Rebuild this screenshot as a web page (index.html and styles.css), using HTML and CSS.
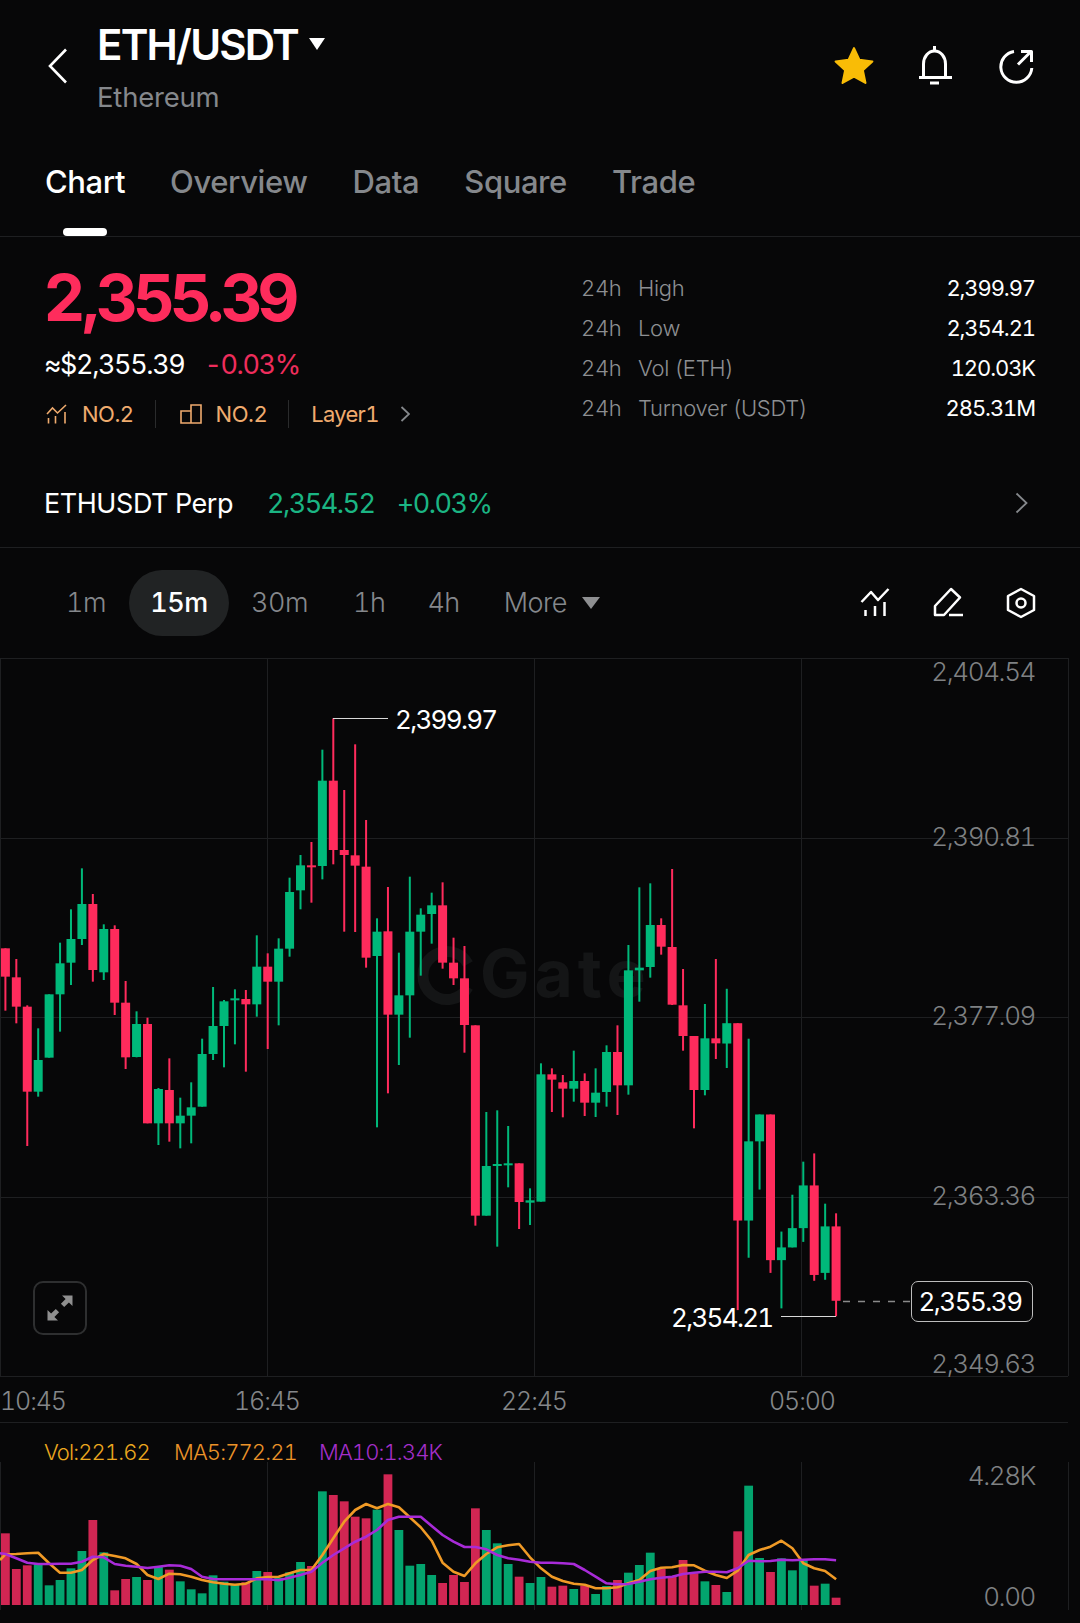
FILE: index.html
```html
<!DOCTYPE html>
<html lang="en">
<head>
<meta charset="utf-8">
<title>ETH/USDT Chart</title>
<link rel="stylesheet" href="styles.css">
</head>
<body>
<div class="page">
  <header class="header">
    <svg class="back" viewBox="0 0 20 36"><path d="M18 1.5 2 18l16 16.5"/></svg>
    <div class="pair">
      <div class="pair-title"><span>ETH/USDT</span><i class="tri tri-white"></i></div>
      <div class="pair-sub">Ethereum</div>
    </div>
    <div class="header-icons">
      <svg class="ico-star" viewBox="0 0 40 38"><path d="M20 2l5.200 11.200 12.300 1.500-9.100 8.300 2.500 12.100L20 29.100 9.100 35.100l2.500-12.100L2.500 14.700l12.300-1.500z"/></svg>
      <svg class="ico-line ico-bell" viewBox="140 25 36 40"><path d="M145.500 57V44a11 13 0 0 1 22 0V57"/><path d="M141 57.500h33"/><path d="M156.500 26v5"/><path d="M152 63h9"/></svg>
      <svg class="ico-line ico-share" viewBox="220 28 36 36"><path d="M236 31.500A15.500 15.500 0 1 0 253.800 48"/><path d="M240 44.500 252.500 32"/><path d="M243 31.500h10.500V42"/></svg>
    </div>
  </header>

  <nav class="tabs">
    <a class="tab tab-on">Chart</a>
    <a class="tab">Overview</a>
    <a class="tab">Data</a>
    <a class="tab">Square</a>
    <a class="tab">Trade</a>
  </nav>

  <section class="summary">
    <div class="quote">
      <div class="price">2,355.39</div>
      <div class="fiat"><span>≈$2,355.39</span><span class="down">-0.03%</span></div>
      <div class="ranks">
        <svg class="rank-ico" viewBox="0 0 22 20"><path d="M1 10 6.500 4l5 5L20 1"/><path d="M2.500 14v5.500M9.500 12v7.500M19 8v11.500"/></svg>
        <span class="rank-text">NO.2</span>
        <i class="rank-sep"></i>
        <svg class="rank-ico" viewBox="0 0 22 20"><path d="M1 7h10v12H1zM11 19V1h10v18z"/></svg>
        <span class="rank-text">NO.2</span>
        <i class="rank-sep"></i>
        <span class="rank-text rank-layer">Layer1</span>
        <svg class="chev chev-sm" viewBox="0 0 10 16"><path d="M1.500 1 9 8l-7.500 7"/></svg>
      </div>
    </div>
    <dl class="stats">
      <div class="stat"><dt><span class="h24">24h</span>High</dt><dd>2,399.97</dd></div>
      <div class="stat"><dt><span class="h24">24h</span>Low</dt><dd>2,354.21</dd></div>
      <div class="stat"><dt><span class="h24">24h</span>Vol (ETH)</dt><dd>120.03K</dd></div>
      <div class="stat"><dt><span class="h24">24h</span>Turnover (USDT)</dt><dd>285.31M</dd></div>
    </dl>
  </section>

  <section class="perp">
    <span class="perp-name">ETHUSDT Perp</span>
    <span class="perp-num">2,354.52</span>
    <span class="perp-num perp-pct">+0.03%</span>
    <svg class="chev chev-lg" viewBox="0 0 13 22"><path d="M1.500 1.500 11.500 11l-10 9.500"/></svg>
  </section>

  <section class="frames">
    <span class="fr fr-1m">1m</span>
    <span class="fr fr-on">15m</span>
    <span class="fr fr-30">30m</span>
    <span class="fr fr-1h">1h</span>
    <span class="fr fr-4h">4h</span>
    <span class="fr fr-more">More</span><i class="tri tri-gray"></i>
    <div class="frame-icons">
      <svg class="ico-line ico-tool" viewBox="860 586 32 32"><path d="M862.500 602 872 592l7 8 10.500-11"/><path d="M866.500 610v6M876 606v10M885.500 602v14"/></svg>
      <svg class="ico-line ico-tool" viewBox="934 586 32 32"><path d="M937 615v-9l16-17 9 8.500L946 615z"/><path d="M951 615h14"/></svg>
      <svg class="ico-line ico-tool" viewBox="1007 586 32 34"><path d="M1023 589l13 7v14l-13 7-13-7v-14z"/><circle cx="1023" cy="603" r="4.500"/></svg>
    </div>
  </section>

  <section class="chart">
    <svg class="plot" id="plot" viewBox="0 658 1080 764">
      <g class="grid">
        <path d="M0 658.500H1068M0 838.500H1068M0 1017.500H1068M0 1197.500H1068M0 1376.500H1068"/>
        <path d="M.5 658V1376M267.500 658V1376M534.500 658V1376M801.500 658V1376M1068.500 658V1376"/>
      </g>
      <text class="watermark" x="480" y="997">Gate</text>
      <path class="watermark-arc" d="M468 964a24 24 0 1 0 0 23"/>
      <g id="candles"></g>
      <path class="marker" d="M333 718.500H388M781 1316.500H836"/>
      <path class="dash" d="M843 1301.500H911"/>
      <text class="axis" x="1035" y="681">2,404.54</text>
      <text class="axis" x="1035" y="846">2,390.81</text>
      <text class="axis" x="1035" y="1025">2,377.09</text>
      <text class="axis" x="1035" y="1205">2,363.36</text>
      <text class="axis" x="1035" y="1373">2,349.63</text>
      <text class="mark-txt" x="395" y="729">2,399.97</text>
      <text class="mark-txt" x="671" y="1327">2,354.21</text>
      <text class="time" x="0" y="1410">10:45</text>
      <text class="time time-c" x="267" y="1410">16:45</text>
      <text class="time time-c" x="534" y="1410">22:45</text>
      <text class="time time-c" x="802" y="1410">05:00</text>
    </svg>
    <div class="tag">2,355.39</div>
    <div class="expand">
      <svg viewBox="0 0 28 28"><path d="M16 1.500h10.500V12l-3.600-3.600-4.700 4.700-3.300-3.300 4.700-4.700zM12 26.500H1.500V16l3.600 3.600 4.700-4.700 3.300 3.300-4.700 4.700z"/></svg>
    </div>
  </section>

  <section class="vol">
    <svg class="plot-vol" id="vol" viewBox="0 1422 1080 201">
      <g class="grid">
        <path d="M0 1422.500H1068"/>
        <path d="M.5 1462V1610M267.500 1462V1610M534.500 1462V1610M801.500 1462V1610M1068.500 1462V1610"/>
      </g>
      <g id="bars"></g>
      <path id="ma5" class="ma ma5"/>
      <path id="ma10" class="ma ma10"/>
      <text class="legend c-vol" x="44" y="1460">Vol:221.62</text>
      <text class="legend c-ma5" x="174" y="1460">MA5:772.21</text>
      <text class="legend c-ma10" x="319" y="1460">MA10:1.34K</text>
      <text class="axis" x="1035" y="1485">4.28K</text>
      <text class="axis" x="1035" y="1606">0.00</text>
    </svg>
  </section>
</div>
<script src="chart.js"></script>
</body>
</html>
```

FILE: styles.css
```css
* { box-sizing: border-box; margin: 0; padding: 0; }
html, body { background: #070708; }
body { font-family: Inter, "Noto Sans", "Liberation Sans", sans-serif; font-variant-numeric: tabular-nums; color: #fff; width: 1080px; height: 1623px; overflow: hidden; }
.page { width: 1080px; display: flex; flex-direction: column; }

.header { height: 137px; display: flex; align-items: flex-start; padding: 0 44px 0 48px; }
.back { width: 20px; height: 36px; margin-top: 48px; fill: none; stroke: #fff; stroke-width: 2.600; }
.pair { margin-left: 29px; margin-top: 20px; }
.pair-title { display: flex; align-items: center; font-size: 42px; line-height: 50px; font-weight: 600; letter-spacing: -1.800px; }
.pair-sub { margin-top: 11px; font-size: 27.500px; line-height: 32px; color: #85888c; letter-spacing: -.200px; }
.tri { display: block; width: 0; height: 0; border-style: solid; border-color: transparent; }
.tri-white { margin-left: 11px; margin-top: -2px; border-width: 12px 8px 0; border-top-color: #fff; }
.header-icons { margin-left: auto; display: flex; align-items: flex-start; padding-top: 45px; padding-right: 2px; }
.ico-star { width: 42px; height: 40px; margin-top: 1px; fill: #f9bc06; stroke: #f9bc06; stroke-width: 2; stroke-linejoin: round; }
.ico-line { fill: none; stroke: #fff; stroke-width: 3; stroke-linecap: butt; stroke-linejoin: round; }
.ico-bell { width: 36px; height: 40px; margin-left: 43px; }
.ico-share { width: 36px; height: 36px; margin-left: 44px; margin-top: 3px; }

.tabs { height: 100px; display: flex; padding-left: 45px; gap: 45px; border-bottom: 1px solid #1e1f21; }
.tab { position: relative; font-size: 31px; line-height: 40px; margin-top: 25px; color: #85888c; letter-spacing: -.400px; font-weight: 500; }
.tab-on { color: #fff; }
.tab-on::after { content: ""; position: absolute; left: 18px; width: 44px; top: 66px; height: 8px; border-radius: 4px; background: #fff; }

.summary { height: 209px; display: flex; justify-content: space-between; padding: 0 45px 0 45px; }
.quote { display: flex; flex-direction: column; margin-left: -1px; }
.price { margin-top: 21px; font-size: 65px; line-height: 80px; font-weight: 700; color: #fe2c5c; letter-spacing: -4.800px; font-variant-numeric: normal; }
.fiat { margin-top: 9px; display: flex; gap: 20px; font-size: 27px; line-height: 36px; letter-spacing: -1.400px; }
.down { color: #ee2d5c; }
.ranks { margin-top: 14px; display: flex; align-items: center; height: 34px; color: #efab6e; font-size: 22px; letter-spacing: -.500px; }
.rank-ico { width: 22px; height: 20px; fill: none; stroke: #efab6e; stroke-width: 1.600; margin: 0 14px 0 2px; }
.rank-sep { width: 1px; height: 28px; background: #2a2b2c; margin: 0 22px 0 21px; }
.rank-sep + .rank-ico { margin-left: 2px; }
.rank-layer { letter-spacing: -.700px; }
.chev { fill: none; stroke: #85888c; stroke-width: 1.800; }
.chev-sm { width: 10px; height: 16px; margin-left: 21px; }
.stats { margin-top: 31px; width: 454px; }
.stat { display: flex; justify-content: space-between; height: 40px; line-height: 40px; font-size: 22px; letter-spacing: -.300px; }
.stat dt { color: #8d8f92; font-weight: 300; }
.h24 { display: inline-block; width: 57px; }
.stat dd { font-weight: 400; letter-spacing: -1.100px; }

.perp { height: 102px; border-bottom: 1px solid #1e1f21; display: flex; align-items: center; padding: 13px 52px 0 44px; font-size: 27px; letter-spacing: -.450px; }
.perp-num { color: #1bb583; margin-left: 34px; font-size: 27px; letter-spacing: -1.500px; }
.perp-pct { margin-left: 22px; }
.chev-lg { width: 13px; height: 22px; margin-left: auto; }

.frames { position: relative; height: 110px; display: flex; align-items: center; padding-left: 66px; font-size: 27px; color: #85888c; letter-spacing: -.500px; font-weight: 300; }
.fr { line-height: 66px; }
.fr-on { width: 100px; height: 66px; margin-left: 23px; text-align: center; border-radius: 33px; background: #212324; color: #fff; font-weight: 500; }
.fr-30 { margin-left: 22px; }
.fr-1h { margin-left: 45px; }
.fr-4h { margin-left: 42px; }
.fr-more { margin-left: 44px; }
.tri-gray { margin-left: 15px; border-width: 12px 9px 0; border-top-color: #8e8f91; }
.frame-icons { margin-left: auto; display: flex; gap: 41px; padding-right: 43px; }
.ico-tool { width: 32px; height: 32px; stroke-width: 2.500; }
.frame-icons .ico-tool:last-child { width: 32px; height: 34px; }

.chart { position: relative; height: 764px; }
.plot { display: block; width: 1080px; height: 764px; overflow: visible; }
.vol { height: 201px; }
.plot-vol { display: block; width: 1080px; height: 201px; }
.grid path { fill: none; stroke: #1e1f21; stroke-width: 1; }
.watermark { font-size: 66px; font-weight: 700; fill: #141516; font-family: Inter, sans-serif; letter-spacing: 5px; }
.watermark-arc { fill: none; stroke: #141516; stroke-width: 11; }
.candle-up { fill: #00b97a; }
.candle-down { fill: #ff2b5c; }
.bar-up { fill: #03a46e; }
.bar-down { fill: #d12653; }
.marker { fill: none; stroke: #d8d8d8; stroke-width: 1; }
.dash { fill: none; stroke: #8a8a8a; stroke-width: 1.400; stroke-dasharray: 7 8; }
.axis { font-size: 26px; fill: #7f8183; text-anchor: end; letter-spacing: -1.400px; font-weight: 300; }
.mark-txt { font-size: 26px; fill: #fff; letter-spacing: -1.700px; font-weight: 400; }
.time { font-size: 25px; fill: #85878a; letter-spacing: -1.100px; font-weight: 300; }
.time-c { text-anchor: middle; }
.legend { font-size: 22px; letter-spacing: -.900px; font-weight: 300; }
.c-vol { fill: #eba81f; }
.c-ma5 { fill: #eb9329; }
.c-ma10 { fill: #a42fc9; }
.ma { fill: none; stroke-width: 2.600; stroke-linejoin: round; }
.ma5 { stroke: #f09a26; }
.ma10 { stroke: #a82bd8; }
.tag { position: absolute; left: 911px; top: 623px; width: 122px; height: 41px; padding-right: 4px; border: 1px solid #bdbdbd; border-radius: 7px; background: #070708; font-size: 26px; line-height: 40px; text-align: center; letter-spacing: -1.500px; }
.expand { position: absolute; left: 33px; top: 623px; width: 54px; height: 54px; border: 2px solid #2e2f30; border-radius: 10px; display: flex; align-items: center; justify-content: center; }
.expand svg { width: 28px; height: 28px; fill: #8f8f8f; }
```

FILE: chart.js
```js
// Candle data: [dir, wickTop, wickBottom, bodyTop, bodyBottom], in crop units of [origin, scale].
var SETS = [
  { y0: 660, s: 3, rows: [
    ['d',865,1052,865,950],['d',897,1090,952,1040],['d',1036,1458,1040,1295],['u',1105,1310,1200,1295],
    ['u',1003,1193,1003,1193],['u',848,1115,910,1003],['u',748,975,837,908],['u',625,855,732,837],
    ['d',702,965,732,930],['u',793,960,807,937],['d',796,1065,807,1028],['d',963,1227,1028,1192],
    ['u',1054,1192,1092,1191],['d',1073,1390,1092,1390],['u',1284,1455,1287,1390],['d',1195,1445,1290,1390],
    ['u',1313,1465,1367,1390],['u',1267,1450,1342,1367],['u',1136,1340,1182,1340],['u',981,1200,1098,1182],
    ['u',1020,1222,1024,1098],['u',988,1153,1015,1021],['d',990,1235,1017,1033],['u',826,1070,920,1033],
    ['d',880,1167,920,965],['u',835,1096,866,965],['u',653,890,696,866],['u',585,748,616,691],
    ['d',546,728,616,620],['u',269,658,362,618],['d',175,613,362,570],['d',390,815,570,585],
    ['d',253,816,586,617]
  ]},
  { y0: 780, s: 3, rows: [
    ['d',120,563,260,533],['u',415,1042,455,528],['d',321,940,454,704],['u',518,855,646,704],
    ['u',290,773,455,646],['u',385,587,404,455],['u',338,491,376,402],['d',307,566,376,548],
    ['d',473,615,548,595],['d',498,818,595,735],['d',736,1337,736,1307],['u',996,1307,1158,1307],
    ['u',991,1400,1152,1158],['u',1038,1222,1150,1155],['d',1150,1347,1150,1266],['u',1225,1335,1261,1268],
    ['u',850,1265,883,1265],['d',865,996,883,899],['d',885,1012,907,926],['u',812,965,903,926],
    ['d',880,1008,903,968],['u',865,1011,938,968],['u',796,980,816,936],['d',736,1005,816,916],
    ['u',495,944,571,916],['u',322,665,563,571],['u',310,593,435,561],['d',415,524,435,500],
    ['d',267,675,501,674],['d',567,812,676,768],['d',768,1045,768,930],['u',672,946,775,930],
    ['d',537,837,775,790]
  ]},
  { y0: 840, s: 2.9037, rows: [
    ['u',432,662,532,591],['d',532,1365,532,1105],['u',577,1213,875,1105],['u',797,1015,797,875],
    ['d',797,1257,797,1220],['u',1137,1360,1183,1220],['u',1030,1183,1127,1183],['u',934,1167,1003,1127],
    ['d',910,1280,1003,1263],['u',1056,1277,1122,1257],['d',1084,1383,1122,1338]
  ]}
];

var BARS = [
  ['d',340],['d',447],['d',436],['u',432],['u',496],['u',480],['u',445],['u',393],['d',300],['u',397],['d',511],
  ['d',477],['u',471],['d',480],['u',440],['d',449],['u',484],['u',508],['u',520],['u',466],['u',485],['u',495],
  ['d',487],['u',453],['d',456],['u',473],['u',457],['u',426],['d',438],['u',214],['d',225],['d',244],['d',290],
  ['d',295],['u',269],['d',163],['u',330],['u',437],['u',432],['u',465],['d',489],['d',465],['d',486],['d',265],
  ['u',330],['u',370],['u',432],['d',470],['u',489],['u',471],['d',500],['d',497],['u',507],['d',497],['u',522],
  ['u',498],['d',480],['u',458],['u',435],['u',398],['d',447],['d',470],['d',420],['d',460],['u',484],['d',495],
  ['u',516],['d',334],['u',197],['u',414],['d',456],['u',415],['u',451],['u',420],['d',497],['u',491],['d',533]
];

var MA5 = [403,402,400,398,430,458,458,450,420,402,408,415,432,465,477,461,463,470,480,487,491,494,491,475,471,470,460,450,450,405,355,305,270,
  252,265,252,262,292,322,362,428,455,468,430,402,382,376,372,412,445,470,483,491,494,505,505,502,490,480,453,443,442,435,436,452,465,
  474,452,405,390,380,362,385,430,445,453,478];
var MA10 = [402,415,428,432,432,431,431,425,410,412,432,437,440,444,440,436,437,447,470,477,478,478,478,478,478,481,473,465,455,428,405,385,365,
  350,330,300,290,290,290,318,345,365,381,381,388,405,415,419,425,428,428,430,432,450,470,490,493,492,485,478,473,470,462,458,455,455,
  457,445,422,424,423,419,421,419,418,418,421];

var STEP = 10.93, X0 = 5.4, SVGNS = 'http://www.w3.org/2000/svg';

function rect(parent, cls, x, y, w, h) {
  var r = document.createElementNS(SVGNS, 'rect');
  r.setAttribute('class', cls);
  r.setAttribute('x', x.toFixed(2));
  r.setAttribute('y', y.toFixed(2));
  r.setAttribute('width', w);
  r.setAttribute('height', Math.max(h, 2).toFixed(2));
  parent.appendChild(r);
}

var candles = document.getElementById('candles');
var idx = 0;
SETS.forEach(function (set) {
  set.rows.forEach(function (c) {
    var cx = X0 + STEP * idx, cls = c[0] === 'u' ? 'candle-up' : 'candle-down';
    var py = function (v) { return set.y0 + v / set.s; };
    rect(candles, cls, cx - 1, py(c[1]), 2, py(c[2]) - py(c[1]));
    rect(candles, cls, cx - 4.5, py(c[3]), 9, py(c[4]) - py(c[3]));
    idx++;
  });
});

var bars = document.getElementById('bars');
BARS.forEach(function (b, i) {
  var y = 1420 + b[1] / 3;
  rect(bars, b[0] === 'u' ? 'bar-up' : 'bar-down', X0 + STEP * i - 4.4, y, 8.8, 1605 - y);
});

function line(id, vals, first) {
  var d = 'M0 ' + (1420 + first / 3).toFixed(1);
  vals.forEach(function (v, i) {
    d += 'L' + (X0 + STEP * i).toFixed(1) + ' ' + (1420 + v / 3).toFixed(1);
  });
  document.getElementById(id).setAttribute('d', d);
}
line('ma5', MA5, 420);
line('ma10', MA10, 400);
```
